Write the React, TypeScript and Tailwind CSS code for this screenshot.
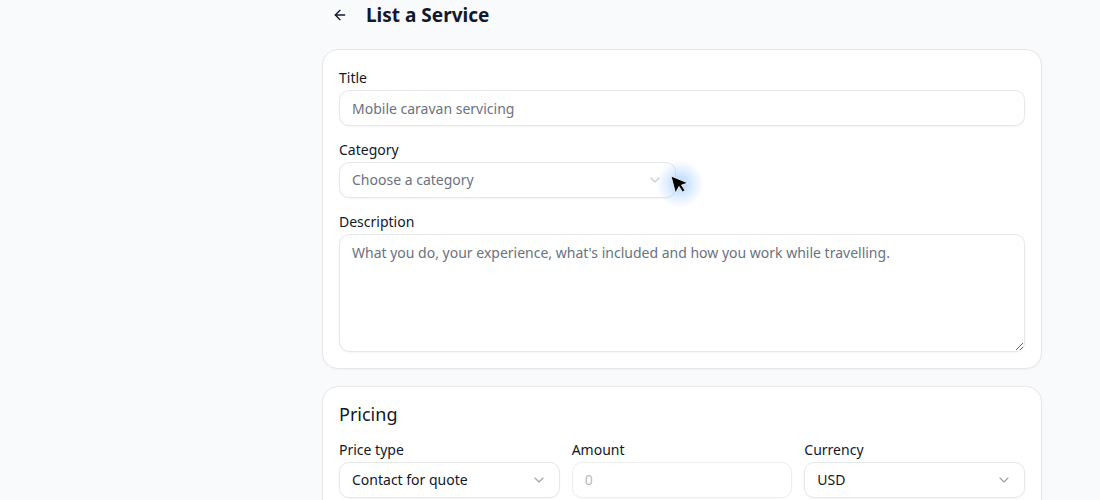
import React from "react";
import { ArrowLeft, ChevronDown } from "lucide-react";

function Label({ children }: { children: React.ReactNode }) {
  return <div className="text-sm leading-6 text-[#111827]">{children}</div>;
}

function Select({ value, placeholder }: { value?: string; placeholder?: string }) {
  return (
    <div className="flex h-9 items-center justify-between rounded-[10px] border border-[#e5e7eb] bg-white pl-3 pr-3 shadow-[0_1px_2px_rgba(0,0,0,0.04)]">
      <span className={value ? "text-sm text-[#111827]" : "text-sm text-[#6b7280]"}>{value ?? placeholder}</span>
      <ChevronDown className={value ? "h-4 w-4 text-[#9ca3af]" : "h-4 w-4 text-[#c4c8cf]"} strokeWidth={1.75} />
    </div>
  );
}

export default function App() {
  return (
    <div
      className="relative min-h-[500px] w-full overflow-hidden bg-[#f8fafc]"
      style={{ fontFamily: '"Noto Sans", "Open Sans", sans-serif' }}
    >
      <div className="ml-[322px] w-[720px]">
        <div className="flex h-[30px] items-center">
          <button className="flex h-[30px] w-9 items-center justify-center text-[#111827]">
            <ArrowLeft className="h-4 w-4" strokeWidth={2} />
          </button>
          <h1 className="ml-2 text-[19px] font-bold text-[#111827]">List a Service</h1>
        </div>

        <div className="mt-[19px] rounded-2xl border border-[#e5e7eb] bg-white p-4 shadow-[0_1px_2px_rgba(0,0,0,0.04)]">
          <div className="flex flex-col gap-3">
            <div>
              <Label>Title</Label>
              <input
                className="h-9 w-full rounded-[10px] border border-[#e5e7eb] bg-white px-3 text-sm text-[#111827] placeholder:text-[#6b7280] shadow-[0_1px_2px_rgba(0,0,0,0.04)] outline-none"
                placeholder="Mobile caravan servicing"
              />
            </div>
            <div className="grid grid-cols-2 gap-3">
              <div>
                <Label>Category</Label>
                <Select placeholder="Choose a category" />
              </div>
            </div>
            <div>
              <Label>Description</Label>
              <textarea
                className="block h-[118px] w-full rounded-[10px] border border-[#e5e7eb] bg-white px-3 py-2 text-sm leading-5 text-[#111827] placeholder:text-[#6b7280] shadow-[0_1px_2px_rgba(0,0,0,0.04)] outline-none"
                placeholder="What you do, your experience, what's included and how you work while travelling."
              />
            </div>
          </div>
        </div>

        <div className="mt-[17px] rounded-2xl border border-[#e5e7eb] bg-white p-4 shadow-[0_1px_2px_rgba(0,0,0,0.04)]">
          <h2 className="mb-3 text-lg leading-tight text-[#111827]">Pricing</h2>
          <div className="grid grid-cols-3 gap-3">
            <div>
              <Label>Price type</Label>
              <Select value="Contact for quote" />
            </div>
            <div>
              <Label>Amount</Label>
              <input
                disabled
                className="h-9 w-full rounded-[10px] border border-[#eceef1] bg-white px-3 text-sm placeholder:text-[#b6bac1] shadow-[0_1px_2px_rgba(0,0,0,0.03)] outline-none"
                placeholder="0"
              />
            </div>
            <div>
              <Label>Currency</Label>
              <Select value="USD" />
            </div>
            <div className="h-8" />
          </div>
        </div>
      </div>

      <div className="pointer-events-none absolute left-[656px] top-[160px] h-[48px] w-[48px] rounded-full bg-[radial-gradient(circle,rgba(96,165,250,0.5)_0%,rgba(147,197,253,0.28)_40%,rgba(191,219,254,0)_70%)]" />
      <svg className="pointer-events-none absolute left-[669px] top-[174px]" width="22" height="22" viewBox="0 0 22 22">
        <path d="M2 2 L19 9 L12.5 11 L16 16.5 L13.5 18 L10 12.5 L6.5 19 Z" fill="#000" stroke="#fff" strokeWidth="0.8" strokeLinejoin="round" />
      </svg>
    </div>
  );
}
